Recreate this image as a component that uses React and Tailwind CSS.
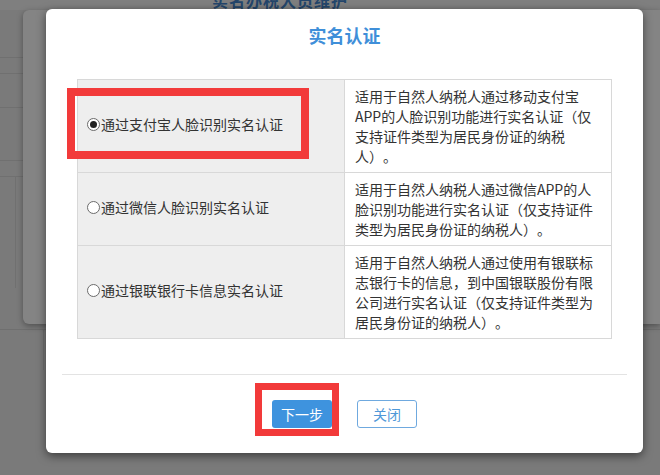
import React from "react";

const rows = [
  {
    label: "通过支付宝人脸识别实名认证",
    checked: true,
    desc: "适用于自然人纳税人通过移动支付宝APP的人脸识别功能进行实名认证（仅支持证件类型为居民身份证的纳税人）。",
  },
  {
    label: "通过微信人脸识别实名认证",
    checked: false,
    desc: "适用于自然人纳税人通过微信APP的人脸识别功能进行实名认证（仅支持证件类型为居民身份证的纳税人）。",
  },
  {
    label: "通过银联银行卡信息实名认证",
    checked: false,
    desc: "适用于自然人纳税人通过使用有银联标志银行卡的信息，到中国银联股份有限公司进行实名认证（仅支持证件类型为居民身份证的纳税人）。",
  },
];

function Radio({ checked }) {
  return (
    <span className="flex h-[13px] w-[13px] shrink-0 items-center justify-center rounded-full border border-[#6b6b6b] bg-white">
      {checked && <span className="h-[7px] w-[7px] rounded-full bg-[#222]" />}
    </span>
  );
}

export default function App() {
  return (
    <div
      className="relative h-[475px] w-[660px] overflow-hidden bg-[#7a7a7a] [text-spacing-trim:space-all]"
      style={{ fontFamily: '"Noto Sans CJK SC", "Noto Sans", sans-serif' }}
    >
      {/* dimmed page behind the dialog */}
      <div className="flex h-[10px] justify-center bg-[#7f7f7f] pr-[100px]">
        <span className="mt-[-10px] text-[16px] font-bold leading-[20px] tracking-[1px] text-[#24466b]">实名办税人员维护</span>
      </div>
      <div className="flex">
        <div className="flex w-[23px] flex-col">
          <div className="mt-[47px] h-px bg-[#707070]" />
          <div className="mt-[15px] h-px bg-[#707070]" />
          <div className="mt-[33px] h-px bg-[#707070]" />
          <div className="mt-[52px] h-px bg-[#707070]" />
          <div className="mt-[15px] h-[112px] border-t border-[#707070] pl-[15px]">
            <div className="h-full w-px bg-[#707070]" />
          </div>
        </div>
        <div className="h-[314px] flex-1 rounded-l-[6px] bg-[#848484] shadow-[0_2px_6px_rgba(0,0,0,0.35)]" />
      </div>
      <div className="mt-[5px] h-px bg-[#6f6f6f]" />
      <div className="ml-[43px] h-[40px] w-px bg-[#707070]" />

      {/* modal */}
      <div className="absolute left-[46px] top-[9px] flex h-[444px] w-[597px] flex-col rounded-[6px] bg-white shadow-[0_3px_10px_rgba(0,0,0,0.5)]">
        <h2 className="pt-[14px] text-center text-[18px] font-bold leading-[24px] text-[#3f8fd9]">实名认证</h2>

        <div className="relative mx-[31px] mt-[32px] border border-[#d8d8d8] text-[14px] leading-[20px] text-[#333]">
          {rows.map((r, i) => (
            <div key={i} className={`flex ${i > 0 ? "border-t border-[#d8d8d8]" : ""}`}>
              <div className="flex w-[267px] shrink-0 items-center gap-[1px] border-r border-[#d8d8d8] bg-[#eeeeee] pb-[4px] pl-[9px]">
                <Radio checked={r.checked} />
                <span>{r.label}</span>
              </div>
              <div className="py-[6px] pl-[10px] pr-[13px]">{r.desc}</div>
            </div>
          ))}
          <div className="pointer-events-none absolute left-[-11px] top-[8px] h-[71px] w-[242px] border-[8px] border-[#f23a3a]" />
        </div>

        <div className="mx-[16px] mt-[35px] h-px bg-[#e3e3e3]" />

        <div className="mt-[25px] flex justify-center gap-[25px]">
          <div className="relative">
            <button className="h-[28px] w-[60px] rounded-[3px] bg-[#3e93de] text-[14px] text-white">下一步</button>
            <div className="pointer-events-none absolute left-[-17px] top-[-17px] h-[53px] w-[84px] border-[7px] border-[#f23a3a]" />
          </div>
          <button className="h-[28px] w-[60px] rounded-[3px] border border-[#6fa9df] bg-white text-[14px] text-[#4f98d8]">关闭</button>
        </div>
      </div>
    </div>
  );
}
